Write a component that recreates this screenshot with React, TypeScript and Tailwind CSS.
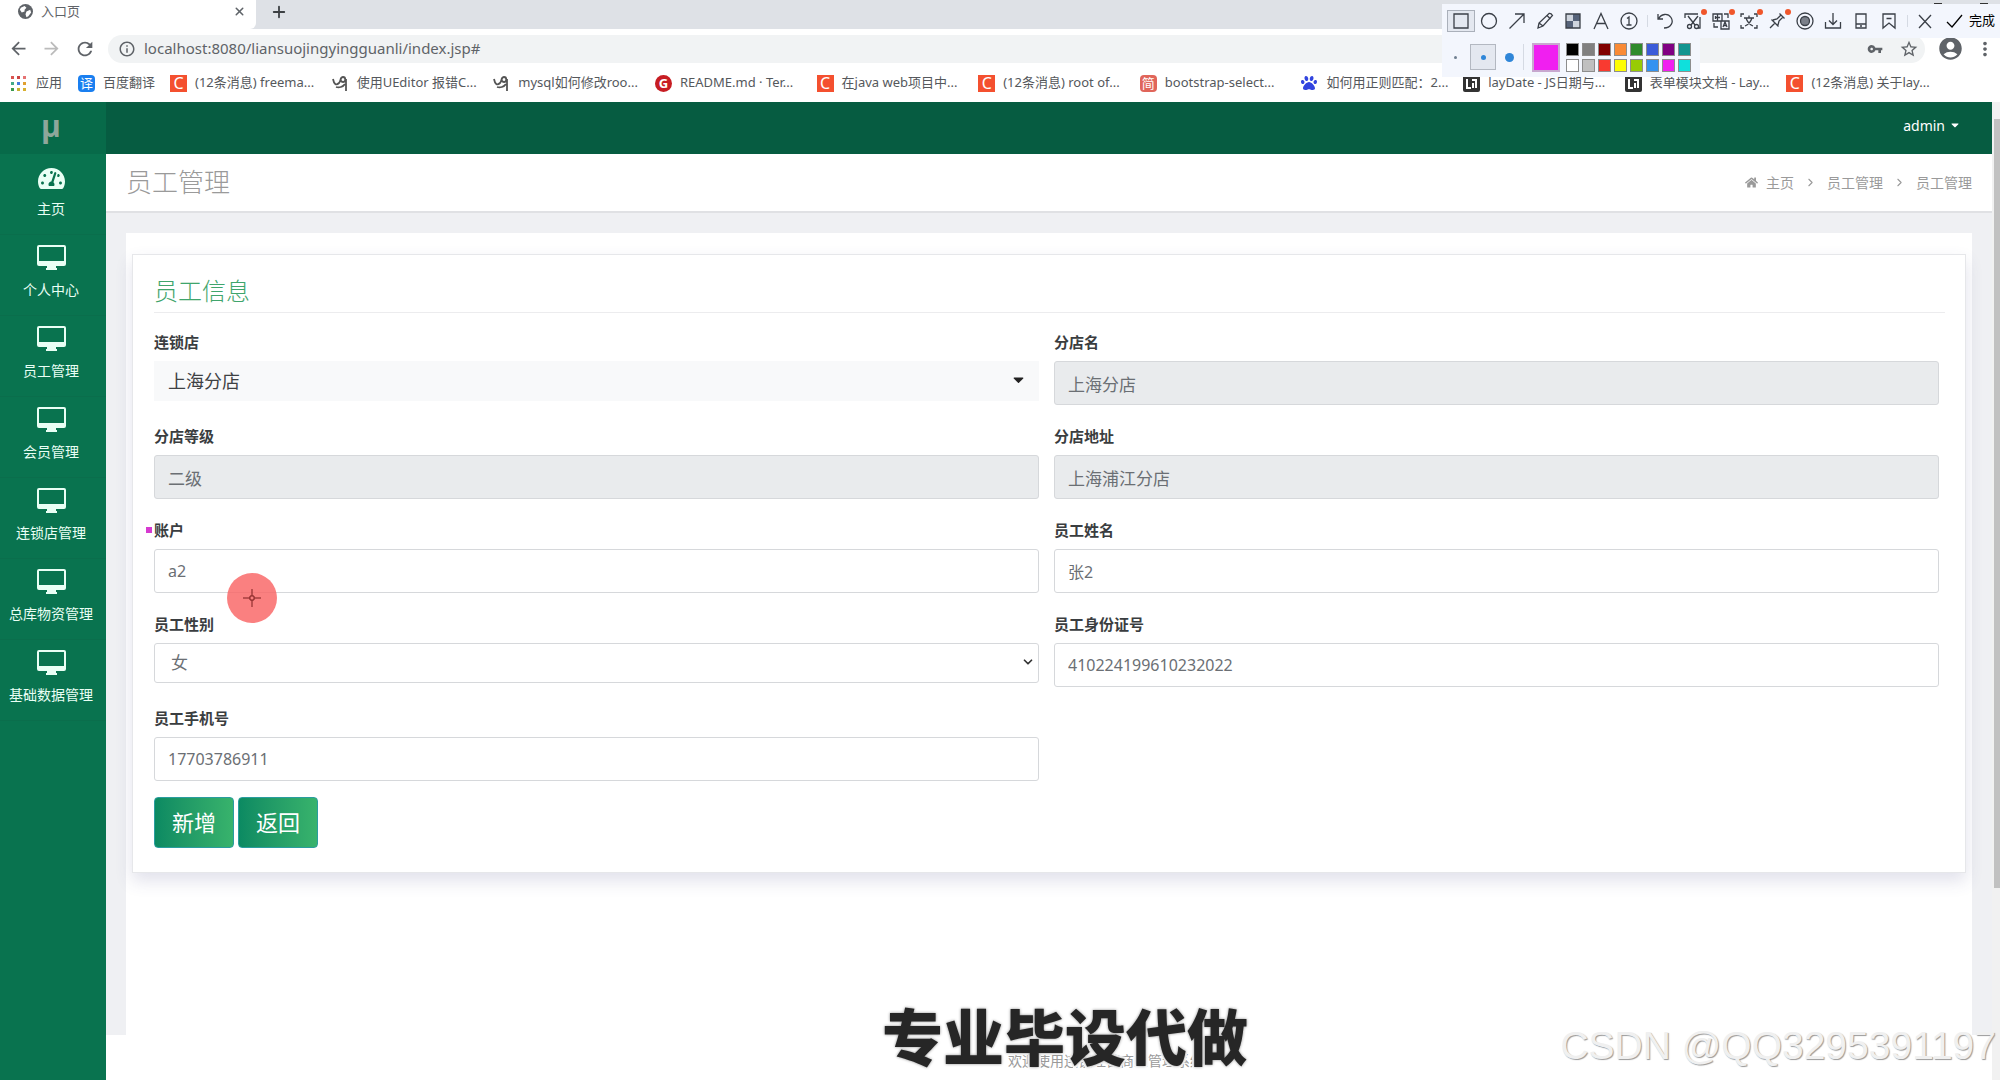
import type { ReactNode } from 'react';
import { FaTachometerAlt, FaHome, FaPaw, FaCaretDown } from 'react-icons/fa';
import {
  MdAccountCircle, MdArrowBack, MdArrowForward, MdInfoOutline, MdMoreVert, MdRefresh, MdStarBorder, MdVpnKey,
} from 'react-icons/md';
import { X, Plus, ChevronRight, ChevronDown } from 'lucide-react';

/* ---------- 浏览器 ---------- */

function CsdnIcon() {
  return <span className="flex h-[17px] w-[17px] items-center justify-center bg-[#f4502f] text-[16px] leading-none text-white">C</span>;
}

function TuringIcon() {
  return (
    <svg width="17" height="17" viewBox="0 0 17 17" fill="none" stroke="#555" strokeWidth="1.8">
      <path d="M1 4c1 5 3 7 6 4c2-2 1-6 4-6c3 0 3 5 0 5c-2 0-3-2-2-4M14 4v12M13 9c-2 3-6 4-9 3" />
    </svg>
  );
}

function LayIcon() {
  return (
    <svg width="17" height="17" viewBox="0 0 17 17">
      <rect width="17" height="17" rx="2" fill="#333" />
      <path d="M4 4v9h4M9 5h4v8M10 8v5" stroke="#fff" strokeWidth="2" fill="none" />
    </svg>
  );
}

const bookmarks: { icon: ReactNode; text: string }[] = [
  { icon: <CsdnIcon />, text: '(12条消息) freema...' },
  { icon: <TuringIcon />, text: '使用UEditor 报错C...' },
  { icon: <TuringIcon />, text: 'mysql如何修改roo...' },
  {
    icon: <span className="flex h-[17px] w-[17px] items-center justify-center rounded-full bg-[#c71d23] text-[13px] font-bold leading-none text-white">G</span>,
    text: 'README.md · Ter...',
  },
  { icon: <CsdnIcon />, text: '在java web项目中...' },
  { icon: <CsdnIcon />, text: '(12条消息) root of...' },
  {
    icon: <span className="flex h-[17px] w-[17px] items-center justify-center rounded-sm bg-[#e0655a] text-[13px] leading-none text-white">简</span>,
    text: 'bootstrap-select...',
  },
  { icon: <FaPaw size={16} color="#3245df" />, text: '如何用正则匹配：2...' },
  { icon: <LayIcon />, text: 'layDate - JS日期与...' },
  { icon: <LayIcon />, text: '表单模块文档 - Lay...' },
  { icon: <CsdnIcon />, text: '(12条消息) 关于lay...' },
];

const appDots = ['#d9534f', '#c44', '#e57373', '#4a8', '#447be0', '#e0a030', '#3a9a50', '#c9b030', '#d9b030'];

function BrowserChrome() {
  return (
    <header className="bg-white text-[#5f6368]">
      <div className="flex h-[29px] bg-[#dee1e6]">
        <div className="flex w-[256px] items-center rounded-br-md bg-white pb-1.5 pl-[18px] pr-2.5">
          <svg width="15" height="15" viewBox="0 0 16 16">
            <circle cx="8" cy="8" r="8" fill="#5f6368" />
            <path d="M3 4l4-2 2 2-2 2v2l-3 1-2-3zM9 8l4-2 1 3-3 4-2 1-1-3z" fill="#fff" />
          </svg>
          <span className="ml-2 flex-1 text-[13px]">入口页</span>
          <button aria-label="关闭标签页"><X size={13} strokeWidth={2.8} /></button>
        </div>
        <button className="ml-3.5 pb-1.5" aria-label="新标签页"><Plus size={18} strokeWidth={2.4} color="#3c4043" /></button>
        <div className="ml-auto flex gap-[38px] pr-3 pt-[3px]">
          <i className="h-px w-2 bg-[#333]" />
          <i className="h-px w-2 bg-[#333]" />
        </div>
      </div>
      <div className="flex h-[39px] items-center pl-2 pr-1">
        <button aria-label="后退"><MdArrowBack size={21} /></button>
        <button className="ml-3" aria-label="前进"><MdArrowForward size={21} color="#bbb" /></button>
        <button className="ml-3" aria-label="刷新"><MdRefresh size={22} /></button>
        <div className="ml-3 flex h-7 flex-1 items-center rounded-full bg-[#f1f3f4] pl-2.5 pr-1.5">
          <MdInfoOutline size={18} />
          <input
            aria-label="地址"
            className="ml-2 flex-1 bg-transparent text-[15px] outline-none"
            defaultValue="localhost:8080/liansuojingyingguanli/index.jsp#"
          />
          <MdVpnKey size={16} />
          <MdStarBorder size={20} className="ml-4" />
        </div>
        <MdAccountCircle size={27} className="ml-3" />
        <MdMoreVert size={22} className="ml-2.5" />
      </div>
      <nav className="flex h-[34px] items-center pb-1 text-[13px] text-[#55585c]">
        <a href="#apps" className="flex w-[78px] items-center pl-[11px]">
          <span className="grid grid-cols-3 gap-[3px]">
            {appDots.map((c, i) => <i key={i} className="h-[3px] w-[3px]" style={{ backgroundColor: c }} />)}
          </span>
          <span className="ml-2.5">应用</span>
        </a>
        <a href="#fanyi" className="flex w-[92px] items-center">
          <span className="flex h-[17px] w-[17px] items-center justify-center rounded-sm bg-[#1a7ff0] text-[13px] leading-none text-white">译</span>
          <span className="ml-2">百度翻译</span>
        </a>
        <div className="flex flex-1 pr-[52px]">
          {bookmarks.map((b) => (
            <a key={b.text} href="#bookmark" className="flex min-w-0 flex-1 basis-0 items-center whitespace-nowrap">
              <span className="w-[17px] shrink-0">{b.icon}</span>
              <span className="ml-2">{b.text}</span>
            </a>
          ))}
        </div>
      </nav>
    </header>
  );
}

/* ---------- 截图标注工具条 ---------- */

function Glyph({ d, children }: { d?: string; children?: ReactNode }) {
  return (
    <svg width="18" height="18" viewBox="0 0 18 18" fill="none" stroke="currentColor" strokeWidth="1.3">
      {children}
      {d && <path d={d} />}
    </svg>
  );
}

const tools: { name: string; icon: ReactNode; dot?: boolean; active?: boolean; gap?: boolean }[] = [
  { name: '矩形', icon: <Glyph d="M2 2h14v14H2z" />, active: true },
  { name: '椭圆', icon: <Glyph><circle cx="9" cy="9" r="7.500" /></Glyph> },
  { name: '箭头', icon: <Glyph d="M1.500 16.500L16 2M7 2h9v9" /> },
  { name: '画笔', icon: <Glyph d="M2 16l1-5L13 1.500q2-.5 3.500 2L7 14zM11 3.500l3.500 3.500M3 11l4 3" /> },
  {
    name: '马赛克',
    icon: (
      <Glyph d="M2 2h14v14H2z">
        <path d="M2 2h7v7H2zM9 9h7v7H9z" fill="#cfd5de" stroke="none" />
        <path d="M9 2h7v7H9zM2 9h7v7H2z" fill="#56637a" stroke="none" />
      </Glyph>
    ),
  },
  { name: '文字', icon: <Glyph d="M2 17L9 1.500L16 17M4.500 11.500h9" /> },
  { name: '序号', icon: <Glyph d="M7 6.500l2-1.500v8M6.500 13h5"><circle cx="9" cy="9" r="8" /></Glyph> },
  { name: '撤销', icon: <Glyph d="M2 2v5h5M2.500 7C5 1.500 12 1 15 5.500S15 16 8 16" />, gap: true },
  {
    name: '裁剪',
    icon: (
      <Glyph d="M1 6V2h13M16 5v11h-2M4 4l7 9M14 4L7 13">
        <circle cx="5.500" cy="14.500" r="2" />
        <circle cx="12.500" cy="14.500" r="2" />
      </Glyph>
    ),
    dot: true,
  },
  { name: '翻译', icon: <Glyph d="M1 2h9v7H1zM3.500 4v3M3 5.500h5M5.500 2v7M9 9h8v8H9zM11 15l2-5 2 5M11.500 13.500h3M2 11v4h4M12 2h4v4" />, dot: true },
  { name: '识别', icon: <Glyph d="M1 5V2h3M14 2h3v3M17 13v3h-3M4 16H1v-3M4 6h10M9 3.500V6M6 6q2 6 7 8M12 6q-2 6-7 8" />, dot: true },
  { name: '钉住', icon: <Glyph d="M2 16l5-5M3.500 7.500l7 7M5 8l4-1 4-4M10 13l1-4 4-4M11.500 1.500l5 5" />, dot: true },
  { name: '录屏', icon: <Glyph><circle cx="9" cy="9" r="8" /><circle cx="9" cy="9" r="4.500" fill="#7b808a" /></Glyph> },
  { name: '保存', icon: <Glyph d="M9 1v11M5 8.500l4 4 4-4M1.500 10v6h15v-6" /> },
  { name: '手机', icon: <Glyph d="M4 2h10v14H4zM4 12h10M8 14h2" /> },
  { name: '收藏', icon: <Glyph d="M3 2h12v14l-6-5-6 5zM6.500 6.500h5" /> },
  { name: '取消', icon: <Glyph d="M3 3l12 13M15 3L3 16" />, gap: true },
];

const swatches = [
  '#000000', '#808080', '#800000', '#f98a35', '#2f8a2c', '#3b5bd9', '#800083', '#129490',
  '#ffffff', '#c0c0c0', '#f93a30', '#fdfd05', '#98cb05', '#3492f0', '#f01ff0', '#0fe0dc',
];

function AnnotationBar() {
  return (
    <div className="absolute right-0 top-1 w-[558px] text-[#3a3f47]">
      <div className="flex h-[34px] items-center bg-[#f3f6fd] pl-[5px]">
        {tools.map((t) => (
          <button
            key={t.name}
            aria-label={t.name}
            className={`relative flex w-7 shrink-0 items-center justify-center ${t.gap ? 'ml-2' : ''} ${t.active ? 'h-[22px] border border-[#aab0ba] bg-[#e4e8f0]' : 'h-6'}`}
          >
            {t.gap && <i className="absolute -left-1 top-1.5 h-3 w-px bg-[#d5dae3]" />}
            {t.icon}
            {t.dot && <span className="absolute right-0 top-0 h-1.5 w-1.5 rounded-full bg-[#f0562b]" />}
          </button>
        ))}
        <button className="flex items-center gap-1.5 pl-1.5 text-[13px] text-black">
          <Glyph d="M2 10l5 5L17 3" />
          完成
        </button>
      </div>
      <div className="flex h-[39px] w-[258px] items-center bg-[#f3f6fd] pb-px pl-3">
        <button aria-label="细" className="flex w-4 items-center"><i className="h-[3px] w-[3px] rounded-full bg-[#6f7f90]" /></button>
        <button aria-label="中" className="flex h-[26px] w-[26px] items-center justify-center border border-[#b3b8c1] bg-[#e4e8f0]">
          <i className="h-[5px] w-[5px] rounded-full bg-[#2f86d8]" />
        </button>
        <button aria-label="粗" className="flex h-[26px] w-7 items-center justify-center border-r border-[#d5dae3]">
          <i className="h-[9px] w-[9px] rounded-full bg-[#2f86d8]" />
        </button>
        <span className="ml-2 h-[29px] w-7 border-2 border-[#c8a8cf] bg-[#f01ff0]" />
        <div className="ml-1.5 grid grid-cols-8 gap-x-[3px] gap-y-[3px]">
          {swatches.map((c) => (
            <button key={c} aria-label={c} className="h-[13px] w-[13px] border border-[#8d8d8d]" style={{ backgroundColor: c }} />
          ))}
        </div>
      </div>
    </div>
  );
}

/* ---------- 后台页面 ---------- */

function DesktopIcon() {
  return (
    <svg width="29" height="25" viewBox="0 0 29 25" fill="currentColor" className="self-start">
      <path fillRule="evenodd" d="M2 0h25a2 2 0 012 2v17a2 2 0 01-2 2h-8v2h1v2H9v-2h1v-2H2a2 2 0 01-2-2V2a2 2 0 012-2zm0 2v14h25V2z" />
    </svg>
  );
}

const menus = ['主页', '个人中心', '员工管理', '会员管理', '连锁店管理', '总库物资管理', '基础数据管理'];

function Sidebar() {
  return (
    <aside className="w-[106px] shrink-0 bg-[#09734f] text-[#e9fff5]">
      <div className="flex h-[52px] items-center justify-center bg-[#076a49] pb-1.5 pr-1 font-['Open_Sans',sans-serif] text-[30px] font-bold text-[#8fa79b]">µ</div>
      <nav>
        {menus.map((m, i) => (
          <a key={m} href="#menu" className="flex h-[81px] flex-col items-center border-b border-[#0a6e4c] pr-1 pt-2.5">
            <span className="flex h-[29px] items-center">{i === 0 ? <FaTachometerAlt size={27} /> : <DesktopIcon />}</span>
            <span className="mt-1.5 text-[14px] leading-5">{m}</span>
          </a>
        ))}
      </nav>
    </aside>
  );
}

const control = 'block w-full rounded-[3px] border border-[#d6d8db] px-[13px] text-[#6b6f74] outline-none';

interface FieldProps {
  id: string;
  label: string;
  value: string;
  readOnly?: boolean;
  large?: boolean;
}

function Label({ id, children }: { id: string; children: ReactNode }) {
  return <label htmlFor={id} className="mb-2 block text-[15px] font-bold leading-[22px] text-[#3a3d40]">{children}</label>;
}

function Field({ id, label, value, readOnly, large }: FieldProps) {
  return (
    <div>
      <Label id={id}>{label}</Label>
      <input
        id={id}
        defaultValue={value}
        readOnly={readOnly}
        className={`${control} h-11 ${large ? 'text-[17px]' : 'text-[16px]'} ${readOnly ? 'bg-[#e9ebed]' : 'bg-white'}`}
      />
    </div>
  );
}

function EmployeeForm() {
  return (
    <form className="border border-[#e6e7ea] bg-white pb-6 pl-[21px] pr-5 pt-[18px] shadow-[0_8px_16px_rgba(70,70,130,0.16)]">
      <h2 className="border-b border-[#ececee] pb-[3px] text-[24px] font-light leading-9 text-[#3fa56c]">员工信息</h2>
      <div className="grid grid-cols-2 gap-x-[15px] gap-y-5 pr-1.5 pt-[18px]">
        <div>
          <Label id="shop">连锁店</Label>
          <div className="relative">
            <select id="shop" className="block h-10 w-full appearance-none bg-[#f8f9fa] px-3.5 text-[18px] text-[#3e4144] outline-none">
              <option>上海分店</option>
            </select>
            <FaCaretDown size={17} className="pointer-events-none absolute right-3 top-2.5 text-[#222]" />
          </div>
        </div>
        <Field id="branch" label="分店名" value="上海分店" readOnly large />
        <Field id="level" label="分店等级" value="二级" readOnly large />
        <Field id="address" label="分店地址" value="上海浦江分店" readOnly large />
        <div className="relative">
          <Field id="account" label="账户" value="a2" />
          <span className="absolute -left-2 top-2 h-1.5 w-1.5 bg-[#d63ad0]" />
        </div>
        <Field id="name" label="员工姓名" value="张2" />
        <div>
          <Label id="gender">员工性别</Label>
          <div className="relative">
            <select id="gender" className={`${control} h-10 appearance-none bg-white pl-4 text-[17px]`}>
              <option>女</option>
              <option>男</option>
            </select>
            <ChevronDown size={14} strokeWidth={3} className="pointer-events-none absolute right-1 top-3 text-[#333]" />
          </div>
        </div>
        <Field id="idcard" label="员工身份证号" value="410224199610232022" />
        <Field id="phone" label="员工手机号" value="17703786911" />
      </div>
      <div className="mt-4 flex gap-1">
        {['新增', '返回'].map((t) => (
          <button key={t} type="button" className="h-[51px] w-20 rounded border border-[#2a9d9f] bg-linear-to-r from-[#0b8a62] to-[#38b36c] text-[22px] text-white">
            {t}
          </button>
        ))}
      </div>
    </form>
  );
}

function Breadcrumb() {
  return (
    <nav className="flex items-center text-[14px] text-[#9a9a9a]">
      <FaHome size={13} className="mr-2" />
      <a href="#home">主页</a>
      <ChevronRight size={13} className="mx-2.5" />
      <a href="#staff">员工管理</a>
      <ChevronRight size={13} className="mx-2.5" />
      <span>员工管理</span>
    </nav>
  );
}

export default function App() {
  return (
    <div className="relative flex min-h-screen flex-col overflow-hidden bg-white font-['Noto_Sans','Noto_Sans_CJK_SC',sans-serif]">
      <BrowserChrome />
      <AnnotationBar />
      <div className="flex flex-1">
        <Sidebar />
        <div className="flex min-w-0 flex-1 flex-col">
          <div className="flex h-[52px] items-center justify-end bg-[#065c41] pb-1.5 pr-[31px]">
            <button className="flex items-center gap-1 text-[14px] text-white">
              admin
              <FaCaretDown size={12} />
            </button>
          </div>
          <div className="flex h-[59px] items-center justify-between border-b-2 border-[#e0e1e4] px-5">
            <h1 className="text-[26px] font-light text-[#9a9a9a]">员工管理</h1>
            <Breadcrumb />
          </div>
          <main className="flex flex-1 flex-col bg-[#eff0f3] px-5 pt-5">
            <div className="flex-1 bg-white px-1.5 pt-[21px]">
              <EmployeeForm />
            </div>
          </main>
          <footer className="h-[45px] bg-white pl-[114px] pt-3.5 text-center text-[14px] leading-6 text-[#9a9a9a]">
            欢迎使用连锁经营商业管理系统
          </footer>
        </div>
        {/* 滚动条 */}
        <div className="w-2 shrink-0 bg-[#f1f1f1] pl-0.5 pt-[17px]">
          <div className="h-4/5 bg-[#c1c1c1]" />
        </div>
      </div>

      {/* 鼠标高亮 */}
      <svg className="pointer-events-none absolute left-[227px] top-[573px]" width="50" height="50" viewBox="0 0 50 50">
        <circle cx="25" cy="25" r="25" fill="#f96464" fillOpacity="0.82" />
        <path d="M25 16v7M25 27v7M16 25h7M27 25h7M23 23h4v4h-4z" stroke="#7c1f1f" fill="none" />
      </svg>

      {/* 字幕与水印 */}
      <p className="pointer-events-none absolute bottom-2 left-0 right-0 pl-[130px] text-center text-[61px] font-black leading-[68px] text-[#262626] [-webkit-text-stroke:4px_#fff] [paint-order:stroke_fill] [text-shadow:0_0_3px_#888]">
        专业毕设代做
      </p>
      <p className="pointer-events-none absolute bottom-3 right-1 font-['Liberation_Sans',sans-serif] text-[39px] leading-[44px] text-[#f0f0f0] [text-shadow:1px_1px_1px_#999]">
        CSDN @QQ3295391197
      </p>
    </div>
  );
}
